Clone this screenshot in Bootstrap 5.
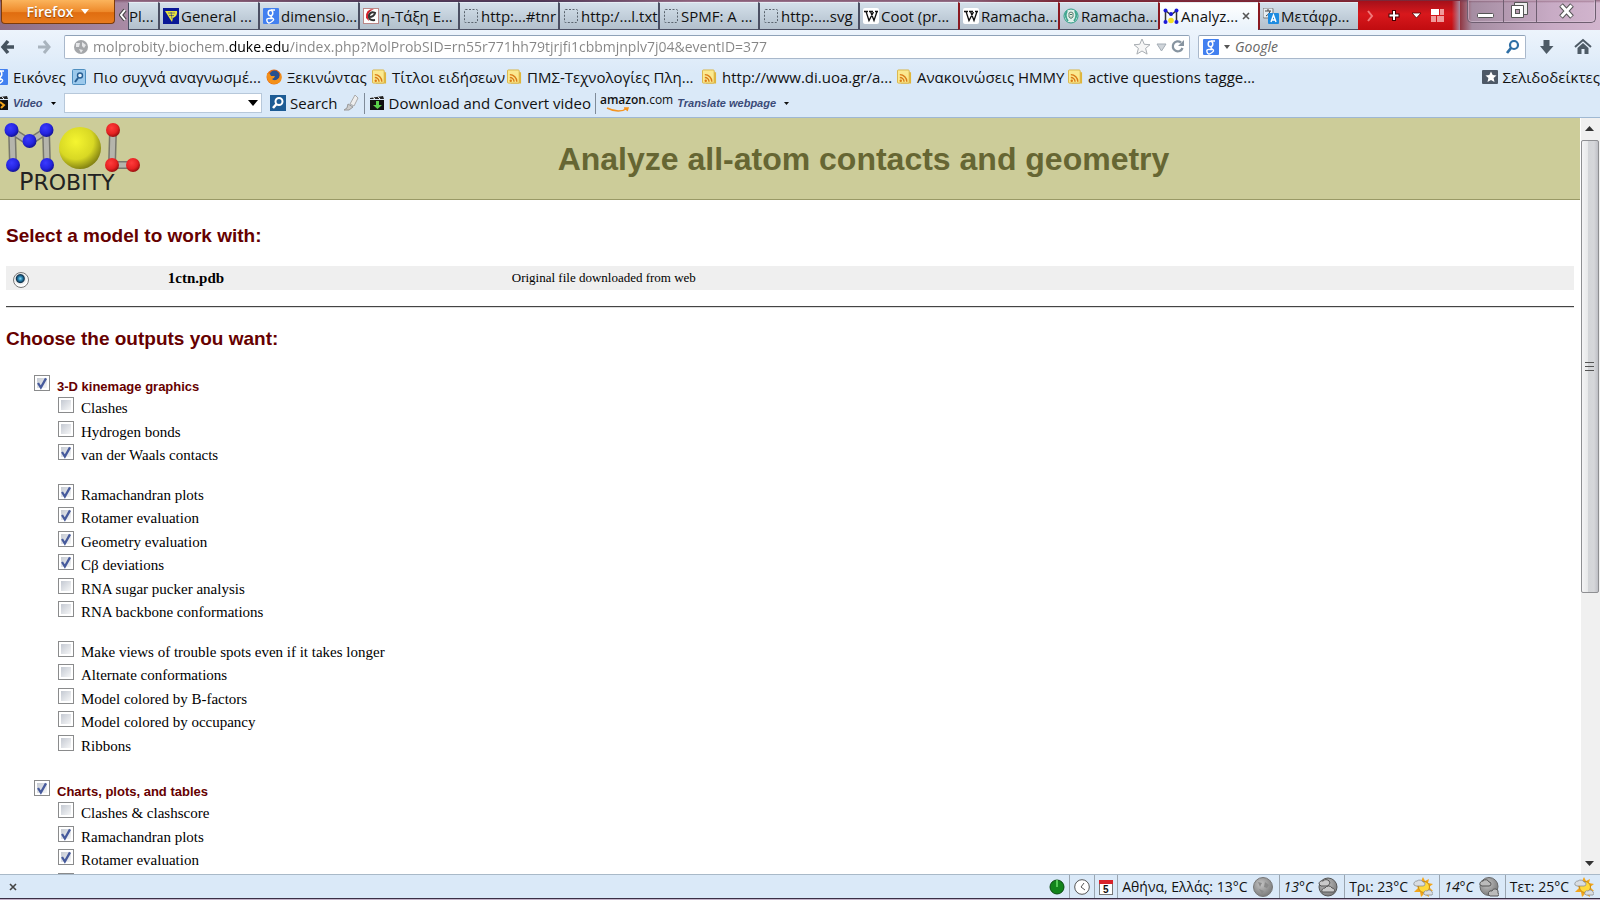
<!DOCTYPE html>
<html lang="en">
<head>
<meta charset="utf-8">
<meta name="viewport" content="width=device-width, initial-scale=1">
<title>Analyze all-atom contacts and geometry</title>
<link href="https://cdn.jsdelivr.net/npm/bootstrap@5.3.0/dist/css/bootstrap.min.css" rel="stylesheet">
<style>
:root{--chrome:#dae9f8;--ui:"Open Sans","Noto Sans",sans-serif}
body{font:15px/20px var(--ui);color:#111;background:#fff}
.window{height:100vh}
svg{display:block;flex:none}
a{color:inherit;text-decoration:none}
button{border:0;background:none;padding:0;color:inherit}
/* title bar */
.titlebar{height:30px;background:linear-gradient(#6d385099,transparent 3px),linear-gradient(90deg,#8d6d84 0,#a98ba5 8%,#8f6f88 15%,#3b3a5c 23%,#3b3a5c 34%,#a888a3 43%,#a2859d 60%,#84202a 66%,#8a1820 91%,#a58da2 92%,#c8abc5 97%,#d2b5ce)}
.fx-button{width:114px;height:24px;margin-left:1px;border:1px solid #7c3b0a;border-top:0;border-radius:0 0 4px 4px;background:linear-gradient(#fbb45c,#ee8a2b 50%,#e06d10 55%,#e87b1d);color:#fff;font:600 14px/22px var(--ui);text-shadow:0 1px 1px #8b4307}
.tab-item{flex:0 0 100px;height:28px;border:1px solid #4b4f63;border-width:1px 0 1px 2px;border-top-color:#e6edf4;background:linear-gradient(#d4e0ea,#bfccd8 60%,#b3c0cc);padding:0 0 0 3px;overflow:hidden;gap:2px}
.tab-item.first{flex-basis:30px;padding-left:0;padding-right:0;border-left-width:1px}
.tab-item.red{border-left-color:#8a1820}
.tab-item.current{background:linear-gradient(#fff,#e9f2fb);border-bottom-color:#e9f2fb}
.tab-tools{flex:0 0 102px;height:29px;background:linear-gradient(90deg,transparent 92%,#a58da2),linear-gradient(#a5101a,#d8181c 45%,#c00c10);color:#fff}
.win-controls{width:129px;height:23px;border:1px solid #6e5e70;border-top:0;border-radius:0 0 5px 5px;box-shadow:inset 0 0 0 1px #dcc6da88}
.win-controls button{height:22px}
.win-controls button+button{border-left:1px solid #6e5e70}
/* toolbars */
.toolbars{background:linear-gradient(#edf4fc,var(--chrome) 50%);border-bottom:1px solid #9fb8d2}
.navrow{height:33px;padding-top:1px}
.box{height:24px;border:1px solid #a9b8cb;border-top-color:#8fa2b8;background:#fff;border-radius:2px}
.box input{border:0;outline:0;padding:0;min-width:0;background:none;height:20px;font-size:14px}
.url{color:transparent;background:linear-gradient(90deg,#858585 136px,#000 136px,#000 195px,#858585 195px)!important;-webkit-background-clip:text!important;background-clip:text!important}
.search-box{flex:0 0 328px}
.search-box input::placeholder{color:#666;font-style:italic}
.downloads{margin-right:6px}
.bookmarks{display:grid;grid-template-columns:80px 194px 106px 135px 195px 195px 171px 1fr auto;height:28px;margin-left:-8px;align-items:center}
.bookmarks a{display:flex;align-items:center;gap:5px;white-space:nowrap;min-width:0}
.addons{height:26px;padding-bottom:2px;gap:4px}
.addons select{width:198px;height:20px;border:1px solid #b7c8da;background:#fff;appearance:none}
.slant{font:italic 700 11px/20px "Liberation Sans Narrow","Liberation Sans",sans-serif;color:#3b4b78}
.video-menu{width:47px}
.shop{font-size:12px;line-height:14px}
.vsep{width:1px;height:21px;background:#7f8b99}
/* page */
.page-head{height:82px;background:#cc9;border-bottom:1px solid #996;font-family:"Liberation Sans",sans-serif}
.page-head h1{font-size:32px;line-height:40px;font-weight:700;color:#663}
.doc{padding:0 6px;font-family:"Liberation Serif",serif;color:#000}
.doc h2{font:700 19px/24px "Liberation Sans",sans-serif;color:#600}
.models{margin:18px 0 16px}
.models td{background:#efefef;height:24px;padding:0 5px;line-height:24px}
.models .note{font-size:13px;padding-left:4px}
.rule{height:2px;background:#444;border-bottom:1px solid #ddd}
.choose{padding:19px 0 24px}
.outputs{padding-left:28px}
.outputs ul{list-style:none;margin:0 0 16px;padding:0 0 0 24px}
.outputs ul.last-set{margin-bottom:22px}
.outputs li{height:23px}
.outputs li:nth-child(even),.outputs .short-set li:nth-child(odd){height:24px}
.outputs .short-set li:nth-child(even){height:23px}
.outputs label{padding-left:7px;line-height:23px}
.opt{display:flex;align-items:flex-start}
.opt input{appearance:none;flex:none;width:16px;height:16px;margin:0;border:1px solid #8a8b8c;background:linear-gradient(135deg,#c4c9d2,#f6f7f8) content-box #fbfbfb;padding:2px}
.opt input:checked{background:url("data:image/svg+xml,%3Csvg xmlns='http://www.w3.org/2000/svg' viewBox='0 0 14 14'%3E%3Cpath d='M3.5 7l2.5 4L10.500 3' fill='none' stroke='%23465a9c' stroke-width='2'/%3E%3C/svg%3E") border-box,linear-gradient(135deg,#c4c9d2,#f6f7f8) content-box #fbfbfb}
.group-head{height:22px}
.group-head label{font:700 13px/23px "Liberation Sans",sans-serif;color:#600}
.radio-dot{appearance:none;display:block;width:16px;height:16px;border:1px solid #777;border-radius:50%;margin:3px 0 0 2px;background:radial-gradient(circle at 45% 40%,#8fdcf5 0,#2a86b4 2px,#10344f 4px,#e8e8e8 5px,#fff 7px)}
.scroller{flex:0 0 20px;background:#f0f0f0;border-left:1px solid #fff}
.thumb{height:453px;border:1px solid #8e8f92;border-radius:2px;background:linear-gradient(90deg,#f4f4f5,#e8e9ea 35%,#d3d5d8 36%,#d6d7da 75%,#bfc0c6);margin-right:1px}
/* status */
.status{height:24px;background:var(--chrome);border-top:1px solid #a9b9c8;font-size:14px}
.status .cell{display:flex;align-items:center;gap:5px;padding:0 6px 0 4px;border-left:1px solid #9aa5b0;height:23px;white-space:nowrap}
.status .tool{padding:0 4px}
.desk{height:2px;background:#c4b2c9;border-top:1px solid #3a3046}
</style>
</head>
<body>
<svg width="0" height="0" class="position-absolute">
<defs>
<radialGradient id="gy" cx=".4" cy=".35" r=".7"><stop offset="0" stop-color="#f5f530"/><stop offset=".6" stop-color="#d8d824"/><stop offset="1" stop-color="#77760f"/></radialGradient>
<radialGradient id="gb" cx=".4" cy=".35" r=".7"><stop offset="0" stop-color="#3a3aff"/><stop offset=".6" stop-color="#2424e0"/><stop offset="1" stop-color="#101088"/></radialGradient>
<radialGradient id="gr" cx=".4" cy=".35" r=".7"><stop offset="0" stop-color="#ff3c3c"/><stop offset=".6" stop-color="#e62222"/><stop offset="1" stop-color="#8a0c0c"/></radialGradient>
<radialGradient id="gm" cx=".4" cy=".35" r=".7"><stop offset="0" stop-color="#c4c4c4"/><stop offset="1" stop-color="#777"/></radialGradient>
<symbol id="goog" viewBox="0 0 16 16"><rect width="16" height="16" rx="1" fill="#4280f0"/><ellipse cx="7.500" cy="5" rx="2.300" ry="2.700" fill="none" stroke="#fff" stroke-width="1.500"/><path d="M8 2h4M9 7.500q-2 1.500 0 2.500t1.500 2-3 2.500-3.500-1.500 3-2.500h2" fill="none" stroke="#fff" stroke-width="1.400"/></symbol>
<symbol id="rss" viewBox="0 0 16 16"><path d="M12 3h3v12H4z" fill="#e0b63a"/><rect x=".5" y=".5" width="12.500" height="14" rx="1" fill="#fbe98f" stroke="#d9b344"/><circle cx="4" cy="12" r="1.300" fill="#d87a16"/><path d="M3 8.500a4.500 4.500 0 014.500 4.500M3 5.500A7.500 7.500 0 0110.500 13" fill="none" stroke="#d87a16" stroke-width="1.500"/></symbol>
<symbol id="blank" viewBox="0 0 16 16"><rect x="1.500" y="1.500" width="13" height="13" rx="1" fill="none" stroke="#59636d" stroke-dasharray="2 1.500"/></symbol>
<symbol id="wiki" viewBox="0 0 16 16"><rect width="16" height="16" rx="2" fill="#fff"/><path d="M1 3.500h4M6 3.500h4M12 3.500h3M3 3.500l3 9L10.500 4M7.500 3.500l3.500 9L14 3.500" fill="none" stroke="#111" stroke-width="1.300"/></symbol>
<symbol id="sun" viewBox="0 0 20 20"><path d="M10 0l2 4 4-2-1 4 5 1-4 3 4 4-5 1 1 5-5-3-3 3-1-5-6 0 4-4-3-4 5-1z" fill="#f2a51c"/><circle cx="11" cy="10" r="5.500" fill="#ffd93b" stroke="#c98a10"/><path d="M1 8a3 3 0 013-4 4 4 0 016 1 2 2 0 010 4H3zM12 18a2 2 0 012-4 3 3 0 015 1 2 2 0 010 3z" fill="#d9dde2" stroke="#8b9096" stroke-width=".8"/></symbol>
<symbol id="moon" viewBox="0 0 20 20"><circle cx="10" cy="10" r="9.500" fill="url(#gm)" stroke="#777"/><path d="M5 5l4 1-2 4zM12 5l4 3-2 3-3-1zM6 12l5 2-2 3z" fill="#8a8a8a"/></symbol>
<symbol id="mooncloud" viewBox="0 0 20 20"><circle cx="10" cy="10" r="9" fill="url(#gm)" stroke="#555"/><path d="M1 7a3 3 0 014-3 4 4 0 017 2l-2 3H3zM4 15a3 3 0 013-4 4 4 0 017 0 2.500 2.500 0 012 4z" fill="#c9c9c9" stroke="#555"/></symbol>
<symbol id="moonlow" viewBox="0 0 20 20"><circle cx="10" cy="9.500" r="9" fill="url(#gm)" stroke="#666"/><path d="M1 8a3 3 0 013-4 3.500 3.500 0 016 1 2 2 0 010 4H3zM11 19a2.500 2.500 0 012-5 3 3 0 016 2 2 2 0 010 3z" fill="#bbb" stroke="#555"/></symbol>
<symbol id="slate" viewBox="0 0 16 16"><path d="M1 3l13-2 1 3H1z" fill="#222"/><path d="M4 2.500l2 1.500M9 1.800L11 4" stroke="#fff"/><rect x="1" y="5" width="14" height="10" fill="#111"/></symbol>
</defs>
</svg>

<div class="window d-flex flex-column overflow-hidden">
<header>
<div class="titlebar d-flex">
  <button class="fx-button d-flex justify-content-center align-items-center gap-2">Firefox <svg width="8" height="5"><path d="M0 0h8L4 5z" fill="#fff"/></svg></button>
  <button class="d-flex align-items-center ps-1" aria-label="Scroll tabs left"><svg width="9" height="16" viewBox="1 0 9 16"><path d="M7 3L3 8l4 5" fill="none" stroke="#444" stroke-width="4"/><path d="M7 3L3 8l4 5" fill="none" stroke="#fff" stroke-width="2"/></svg></button>
  <nav class="d-flex flex-fill align-items-end text-nowrap" aria-label="Tabs">
    <a href="#" class="tab-item first d-flex align-items-center">Pl...</a>
    <a href="#" class="tab-item d-flex align-items-center"><svg width="16" height="16"><rect width="16" height="16" fill="#0a1896"/><path d="M2 3l12 0q1 5-4 7l-1 4-2-3z" fill="#e8e13c"/><path d="M5 5l7 0M6 7.500l5 0M8 4l1 7" stroke="#0a1896" stroke-width=".5"/></svg>General ...</a>
    <a href="#" class="tab-item d-flex align-items-center"><svg width="16" height="16"><use href="#goog"/></svg>dimensio...</a>
    <a href="#" class="tab-item d-flex align-items-center"><svg width="16" height="16"><rect x=".5" y=".5" width="15" height="15" fill="#fff" stroke="#b88"/><path d="M11 1Q2 1 3 10l3 3-1-5q0-4 6-7z" fill="#d3202b"/><path d="M6 9q5 0 6-4-4-2-6 2-1 6 6 5" fill="none" stroke="#333" stroke-width="2"/></svg>η-Τάξη Ε...</a>
    <a href="#" class="tab-item d-flex align-items-center"><svg width="16" height="16"><use href="#blank"/></svg>http:...#tnr</a>
    <a href="#" class="tab-item d-flex align-items-center"><svg width="16" height="16"><use href="#blank"/></svg>http:/...l.txt</a>
    <a href="#" class="tab-item d-flex align-items-center"><svg width="16" height="16"><use href="#blank"/></svg>SPMF: A ...</a>
    <a href="#" class="tab-item d-flex align-items-center"><svg width="16" height="16"><use href="#blank"/></svg>http:....svg</a>
    <a href="#" class="tab-item d-flex align-items-center"><svg width="16" height="16"><use href="#wiki"/></svg>Coot (pr...</a>
    <a href="#" class="tab-item red d-flex align-items-center"><svg width="16" height="16"><use href="#wiki"/></svg>Ramacha...</a>
    <a href="#" class="tab-item red d-flex align-items-center"><svg width="16" height="16"><circle cx="8" cy="8" r="7" fill="#dff0ea" stroke="#2b9c84"/><path d="M4 3q-3 5 1 10M12 3q3 5-1 10" fill="none" stroke="#3fa58e" stroke-width="1.800"/><path d="M6 5q2-2 4 0v4q-2 3-4 0z" fill="#f2f2e4" stroke="#557a70"/><path d="M7 6.500h2M7.500 9h1" stroke="#35756a"/></svg>Ramacha...</a>
    <a href="#" class="tab-item red current d-flex align-items-center" aria-current="page"><svg width="16" height="16"><path d="M2.500 14V2.500L8 7l5.500-4.500V14" fill="none" stroke="#333" stroke-width="1.500"/><g fill="#1a1ad8"><circle cx="2.500" cy="2.500" r="2"/><circle cx="13.500" cy="2.500" r="2"/><circle cx="2.500" cy="14" r="2"/><circle cx="13.500" cy="14" r="2"/><circle cx="8" cy="6" r="2"/></g><circle cx="8" cy="12.500" r="2.800" fill="#f4e021"/></svg>Analyz...<svg width="8" height="8" class="ms-auto me-2"><path d="M1 1l6 6M7 1L1 7" stroke="#555" stroke-width="1.600"/></svg></a>
    <a href="#" class="tab-item red d-flex align-items-center"><svg width="16" height="16"><rect x="0" y="0" width="10" height="10" rx="1" fill="#e6edf2" stroke="#777"/><path d="M2 3h6M5 1v2M3 8q4-2 4-5" stroke="#444" fill="none"/><rect x="5" y="5" width="11" height="11" rx="1" fill="#1d8be0"/><path d="M8 14l2.500-7 2.500 7M9 12h3" stroke="#fff" fill="none" stroke-width="1.400"/></svg>Μετάφρ...</a>
    <div class="tab-tools d-flex align-items-center">
      <svg width="98" height="20" viewBox="0 0 98 20"><path d="M10 5l4 5-4 5" fill="none" stroke="#f07a7a" stroke-width="2"/><path d="M36 4v11M30.500 9.500h11" stroke="#400" stroke-width="4"/><path d="M36 5v9M31.500 9.500h9" stroke="#fff" stroke-width="2"/><path d="M54 7h9l-4.500 5z" fill="#fff" stroke="#500" stroke-width=".8"/><path d="M73 3h8v6h-8z" fill="#fff"/><path d="M82 3h4v6h-4zM73 10h5v6h-5zM79 10h7v6h-7z" fill="#f09a9a"/></svg>
    </div>
  </nav>
  <div class="win-controls d-flex me-1">
    <button style="width:35px" aria-label="Minimize"><svg width="34" height="22"><rect x="9.500" y="13.500" width="16" height="4" rx="1" fill="#fff" stroke="#555"/></svg></button>
    <button style="width:33px" aria-label="Restore"><svg width="32" height="22"><path d="M10.500 2.500h13v12h-13z" fill="#eee" stroke="#555"/><path d="M7.500 5.500h12v12h-12z" fill="#fff" stroke="#555"/><rect x="11.500" y="9.500" width="4" height="4" fill="#b79bb0" stroke="#555"/></svg></button>
    <button class="flex-fill" aria-label="Close"><svg width="58" height="22"><path d="M24 5l11 12M35 5L24 17" stroke="#555" stroke-width="5"/><path d="M24.500 5.500l10 11M34.500 5.500l-10 11" stroke="#fff" stroke-width="3"/></svg></button>
  </div>
</div>

<div class="toolbars">
  <div class="navrow d-flex align-items-center">
    <button aria-label="Back"><svg width="30" height="20"><path d="M8 4L3 10l5 6M3 10h11" fill="none" stroke="#46535f" stroke-width="3.500"/></svg></button>
    <button aria-label="Forward" class="pe-1"><svg width="30" height="20"><path d="M14 4l5 6-5 6M8 10h10" fill="none" stroke="#a9b4be" stroke-width="3"/></svg></button>
    <div class="box d-flex align-items-center flex-fill px-1">
      <svg width="16" height="16" class="mx-1"><circle cx="8" cy="8" r="7" fill="#a4a6a9"/><path d="M3 4l4 0-1 4-3 0zM9 3l4 3-2 3-2-2zM6 10l4 1-2 3z" fill="#e5e6e8"/></svg>
      <input class="url flex-fill" type="text" aria-label="Address" value="molprobity.biochem.duke.edu/index.php?MolProbSID=rn55r771hh79tjrjfi1cbbmjnplv7j04&amp;eventID=377">
      <svg width="52" height="18"><path d="M9 1l2.300 5.300 5.700.4-4.400 3.700 1.500 5.700L9 13l-5.100 3.100 1.500-5.700L1 6.700l5.700-.4z" fill="#f6f6f6" stroke="#a9aeb3"/><path d="M24 6h9l-4.500 7z" fill="#d0d5da" stroke="#a4adb5"/><path d="M48 4.500a5 5 0 101.500 5.500" fill="none" stroke="#8794a0" stroke-width="2.300"/><path d="M45 8h6V2z" fill="#8794a0"/></svg>
    </div>
    <div class="search-box box d-flex align-items-center gap-1 px-1 ms-2">
      <svg width="16" height="18"><use href="#goog" width="16" height="18"/></svg>
      <svg width="8" height="4"><path d="M1 0h6L4 4z" fill="#555"/></svg>
      <input class="flex-fill" type="search" placeholder="Google" aria-label="Search">
      <svg width="16" height="16"><circle cx="9" cy="6" r="4" fill="#fff" stroke="#2f6fa5" stroke-width="2.200"/><path d="M6 9l-4 5" stroke="#2f6fa5" stroke-width="2.800"/></svg>
    </div>
    <button aria-label="Downloads" class="downloads ms-2 ps-1"><svg width="18" height="18"><path d="M5.500 2h6v6h4L8.500 16 2 8h3.500z" fill="#4e5b66"/></svg></button>
    <button aria-label="Home" class="mx-2 ps-1 pe-0"><svg width="18" height="18"><path d="M1 9l8-7 8 7" fill="none" stroke="#4e5b66" stroke-width="2"/><path d="M3.500 10L9 5l5.500 5v6h-4v-5h-3v5h-4z" fill="#4e5b66"/></svg></button>
  </div>
  <nav class="bookmarks" aria-label="Bookmarks">
    <a href="#"><svg width="16" height="16"><use href="#goog"/></svg>Εικόνες</a>
    <a href="#"><svg width="16" height="16"><rect x=".5" y=".5" width="13" height="15" rx="1" fill="#9cc9ec" stroke="#4f8fc0"/><circle cx="8" cy="6.500" r="2.500" fill="#e4f2fc" stroke="#285f94" stroke-width="1.400"/><path d="M6 9l-3 4" stroke="#285f94" stroke-width="2"/></svg>Πιο συχνά αναγνωσμέ...</a>
    <a href="#"><svg width="16" height="16"><circle cx="8" cy="8" r="7.500" fill="#e66a10"/><circle cx="8.500" cy="6.500" r="5" fill="#27508e"/><path d="M1 4q3 0 4 3l4 0q-1 3-3 3 3 3 7-1l2-5q3 12-8 11Q0 14 1 4z" fill="#f39019"/></svg>Ξεκινώντας</a>
    <a href="#"><svg width="15" height="16"><use href="#rss"/></svg>Τίτλοι ειδήσεων</a>
    <a href="#"><svg width="15" height="16"><use href="#rss"/></svg>ΠΜΣ-Τεχνολογίες Πλη...</a>
    <a href="#"><svg width="15" height="16"><use href="#rss"/></svg>http://www.di.uoa.gr/a...</a>
    <a href="#"><svg width="15" height="16"><use href="#rss"/></svg>Ανακοινώσεις ΗΜΜΥ</a>
    <a href="#"><svg width="15" height="16"><use href="#rss"/></svg>active questions tagge...</a>
    <a href="#"><svg width="16" height="16"><rect x="0" y="1" width="16" height="14" rx="1" fill="#4d5866"/><path d="M9 2.500l1.700 3.600 3.800.4-2.900 2.600.9 4L9 11l-3.500 2.100.9-4-2.900-2.600 3.800-.4z" fill="#fff"/></svg>Σελιδοδείκτες</a>
  </nav>
  <div class="addons d-flex align-items-center">
    <svg width="9" height="16" viewBox="7 0 9 16"><use href="#slate" width="16" height="16"/><path d="M7 7l4 3-3 3" stroke="#f2a51c" stroke-width="2" fill="none"/></svg>
    <button class="slant video-menu d-flex align-items-center gap-2">Video <svg width="5" height="3"><path d="M0 0h5L2.500 3z"/></svg></button>
    <div class="position-relative d-flex"><select aria-label="Search terms"><option></option></select><svg width="10" height="6" class="position-absolute end-0 top-50 translate-middle-y me-1"><path d="M0 0h10L5 6z"/></svg></div>
    <button class="d-flex align-items-center gap-1 ms-1"><svg width="16" height="16"><rect width="16" height="16" fill="#1d5c95"/><circle cx="9" cy="6.500" r="3.500" fill="none" stroke="#fff" stroke-width="2"/><path d="M6.500 9L3 13" stroke="#fff" stroke-width="2.500"/></svg>Search</button>
    <svg width="18" height="18"><path d="M8 10l5-9 3 3-4 8z" fill="#eee" stroke="#aaa"/><path d="M6 10l5 3-4 3H2l3-2z" fill="#ccc" stroke="#999"/></svg>
    <span class="vsep"></span>
    <button class="d-flex align-items-center gap-1"><svg width="16" height="16"><use href="#slate"/><path d="M7 6h3v4h3l-4.500 4L4 10h3z" fill="#5bd04b"/></svg>Download and Convert video</button>
    <span class="vsep"></span>
    <a href="#" class="shop"><b class="fw-semibold">amazon</b>.com<svg width="40" height="6"><path d="M7 1q12 6 21 0M24 1h4l-1 3" fill="none" stroke="#f5931e" stroke-width="1.500"/></svg></a>
    <button class="slant d-flex align-items-center gap-2">Translate webpage <svg width="5" height="3"><path d="M0 0h5L2.500 3z" fill="#111"/></svg></button>
  </div>
</div>
</header>

<main class="d-flex flex-fill overflow-hidden" style="min-height:0">
  <div class="flex-fill overflow-hidden">
    <div class="page-head d-flex align-items-center">
      <svg width="147" height="76" viewBox="0 2 147 76" role="img" aria-label="MolProbity">
        <g stroke="#77776c" stroke-width="8" fill="none"><path d="M12 12l1 34M46 12l1 34M12 12l17 11 17-11M113 12l-1 34M112 46h20"/></g>
        <g stroke="#b5b5ac" stroke-width="5" fill="none"><path d="M12 12l1 34M46 12l1 34M12 12l17 11 17-11M113 12l-1 34M112 46h20"/></g>
        <g fill="url(#gb)"><circle cx="11.500" cy="11" r="7"/><circle cx="46.500" cy="11" r="7"/><circle cx="29.500" cy="22" r="7"/><circle cx="13" cy="46" r="7"/><circle cx="47" cy="46" r="7"/></g>
        <circle cx="80" cy="29" r="21" fill="url(#gy)"/>
        <g fill="url(#gr)"><circle cx="113" cy="11" r="7"/><circle cx="112" cy="46" r="7"/><circle cx="133" cy="46" r="7"/></g>
        <text x="19" y="71" font-family="DejaVu Sans" font-size="24" fill="#222">P<tspan font-size="22">ROBITY</tspan></text>
      </svg>
      <h1 class="flex-fill text-center mb-0">Analyze all-atom contacts and geometry</h1>
    </div>
    <form class="doc">
      <h2 class="mb-0 pt-4">Select a model to work with:</h2>
      <table class="models w-100">
        <colgroup><col style="width:10%"><col style="width:22%"><col></colgroup>
        <tr><td><input class="radio-dot" type="radio" name="model" id="m1" checked></td><td><label for="m1"><b>1ctn.pdb</b></label></td><td class="note">Original file downloaded from web</td></tr>
      </table>
      <div class="rule"></div>
      <h2 class="mb-0 choose">Choose the outputs you want:</h2>
      <div class="outputs">
        <div class="opt group-head"><input type="checkbox" id="g1" checked><label for="g1">3-D kinemage graphics</label></div>
        <ul class="short-set">
          <li class="opt"><input type="checkbox" id="a1"><label for="a1">Clashes</label></li>
          <li class="opt"><input type="checkbox" id="a2"><label for="a2">Hydrogen bonds</label></li>
          <li class="opt"><input type="checkbox" id="a3" checked><label for="a3">van der Waals contacts</label></li>
        </ul>
        <ul>
          <li class="opt"><input type="checkbox" id="b1" checked><label for="b1">Ramachandran plots</label></li>
          <li class="opt"><input type="checkbox" id="b2" checked><label for="b2">Rotamer evaluation</label></li>
          <li class="opt"><input type="checkbox" id="b3" checked><label for="b3">Geometry evaluation</label></li>
          <li class="opt"><input type="checkbox" id="b4" checked><label for="b4">Cβ deviations</label></li>
          <li class="opt"><input type="checkbox" id="b5"><label for="b5">RNA sugar pucker analysis</label></li>
          <li class="opt"><input type="checkbox" id="b6"><label for="b6">RNA backbone conformations</label></li>
        </ul>
        <ul class="last-set">
          <li class="opt"><input type="checkbox" id="c1"><label for="c1">Make views of trouble spots even if it takes longer</label></li>
          <li class="opt"><input type="checkbox" id="c2"><label for="c2">Alternate conformations</label></li>
          <li class="opt"><input type="checkbox" id="c3"><label for="c3">Model colored by B-factors</label></li>
          <li class="opt"><input type="checkbox" id="c4"><label for="c4">Model colored by occupancy</label></li>
          <li class="opt"><input type="checkbox" id="c5"><label for="c5">Ribbons</label></li>
        </ul>
        <div class="opt group-head"><input type="checkbox" id="g2" checked><label for="g2">Charts, plots, and tables</label></div>
        <ul class="short-set">
          <li class="opt"><input type="checkbox" id="d1"><label for="d1">Clashes &amp; clashscore</label></li>
          <li class="opt"><input type="checkbox" id="d2" checked><label for="d2">Ramachandran plots</label></li>
          <li class="opt"><input type="checkbox" id="d3" checked><label for="d3">Rotamer evaluation</label></li>
          <li class="opt"><input type="checkbox" id="d4" checked><label for="d4"></label></li>
        </ul>
      </div>
    </form>
  </div>
  <div class="scroller d-flex flex-column">
    <svg width="18" height="22"><path d="M4 13l4.500-5 4.500 5z" fill="#333"/></svg>
    <div class="thumb d-flex align-items-center justify-content-center"><svg width="10" height="11"><path d="M0 1.500h9M0 5.500h9M0 9.500h9" stroke="#555"/></svg></div>
    <svg width="18" height="22" class="mt-auto"><path d="M4 9h9l-4.500 5z" fill="#333"/></svg>
  </div>
</main>

<footer>
  <div class="status d-flex align-items-center">
    <button class="ms-2 me-auto" aria-label="Close add-on bar"><svg width="10" height="8"><path d="M2 1l6 6M8 1L2 7" stroke="#444" stroke-width="1.600"/></svg></button>
    <svg width="16" height="16" class="me-1"><circle cx="8" cy="8" r="7" fill="#12841b" stroke="#0a4a10"/><path d="M8 8V1" stroke="#6be06b" stroke-width="1.500"/></svg>
    <div class="cell tool"><svg width="16" height="16"><circle cx="8" cy="8" r="7.300" fill="#fff" stroke="#555"/><path d="M10 4L7 8l4 3" fill="none" stroke="#555"/></svg></div>
    <div class="cell tool"><svg width="14" height="16"><rect x=".5" y="1.500" width="13" height="14" fill="#fff" stroke="#777"/><path d="M0 1h14v4H0z" fill="#d9232a"/><text x="4" y="14" font-family="Liberation Sans" font-size="10" font-weight="700" fill="#111">5</text></svg></div>
    <div class="cell">Αθήνα, Ελλάς: 13°C<svg width="20" height="20"><use href="#moon"/></svg></div>
    <div class="cell"><i>13°C</i><svg width="20" height="20"><use href="#mooncloud"/></svg></div>
    <div class="cell">Τρι: 23°C<svg width="20" height="20"><use href="#sun"/></svg></div>
    <div class="cell"><i>14°C</i><svg width="20" height="20"><use href="#moonlow"/></svg></div>
    <div class="cell">Τετ: 25°C<svg width="20" height="20"><use href="#sun"/></svg></div>
  </div>
  <div class="desk"></div>
</footer>
</div>
<script src="https://cdn.jsdelivr.net/npm/bootstrap@5.3.0/dist/js/bootstrap.bundle.min.js"></script>
</body>
</html>
